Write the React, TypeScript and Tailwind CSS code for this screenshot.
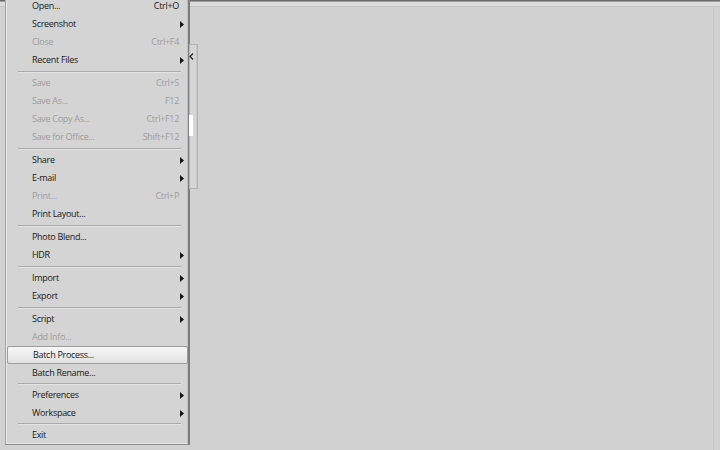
type Item =
  | { sep: true; h?: number }
  | { sep?: false; label: string; shortcut?: string; sub?: boolean; disabled?: boolean; active?: boolean };

const items: Item[] = [
  { label: 'Open...', shortcut: 'Ctrl+O' },
  { label: 'Screenshot', sub: true },
  { label: 'Close', shortcut: 'Ctrl+F4', disabled: true },
  { label: 'Recent Files', sub: true },
  { sep: true },
  { label: 'Save', shortcut: 'Ctrl+S', disabled: true },
  { label: 'Save As...', shortcut: 'F12', disabled: true },
  { label: 'Save Copy As...', shortcut: 'Ctrl+F12', disabled: true },
  { label: 'Save for Office...', shortcut: 'Shift+F12', disabled: true },
  { sep: true },
  { label: 'Share', sub: true },
  { label: 'E-mail', sub: true },
  { label: 'Print...', shortcut: 'Ctrl+P', disabled: true },
  { label: 'Print Layout...' },
  { sep: true },
  { label: 'Photo Blend...' },
  { label: 'HDR', sub: true },
  { sep: true },
  { label: 'Import', sub: true },
  { label: 'Export', sub: true },
  { sep: true },
  { label: 'Script', sub: true },
  { label: 'Add Info...', disabled: true },
  { label: 'Batch Process...', active: true },
  { label: 'Batch Rename...' },
  { sep: true, h: 4 },
  { label: 'Preferences', sub: true },
  { label: 'Workspace', sub: true },
  { sep: true, h: 4 },
  { label: 'Exit' },
];

function Arrow() {
  return (
    <svg width="4" height="7" viewBox="0 0 4 7" className="mr-[3px]">
      <path d="M0 0L4 3.5L0 7Z" fill="#151515" />
    </svg>
  );
}

function FileMenu() {
  return (
    <div className="absolute left-[5px] top-[-3px] w-[185px] h-[448px] bg-[#d4d4d4] border-l border-[#a2a2a2] border-r-2 border-r-[#7d7d7d] border-b border-b-[#8c8c8c]">
      <div className="h-full border-l border-[#e9e9e9] border-r border-r-[#c2c2c2] border-b border-b-[#e6e6e6]">
        {items.map((it, i) =>
          it.sep ? (
            <div
              key={i}
              className={(it.h === 4 ? 'h-[4px] pt-[1px]' : 'h-[5px] pt-[2px]') + ' ml-[11px] mr-[6px]'}
            >
              <div className="h-px bg-[#a9a9a9]" />
              <div className="h-px bg-[#e4e4e4]" />
            </div>
          ) : (
            <div
              key={i}
              className={
                'h-[18px] flex items-center justify-between pl-[25px] ' +
                (it.active
                  ? 'mr-[-1px] border border-[#9d9d9d] rounded-[2px] bg-gradient-to-b from-[#f7f7f7] to-[#e2e2e2] pl-[24px]'
                  : '') +
                (it.disabled ? ' text-[#9d9d9d]' : ' text-[#181818]')
              }
            >
              <span>{it.label}</span>
              {it.sub ? <Arrow /> : it.shortcut ? <span className="mr-[8px]">{it.shortcut}</span> : null}
            </div>
          )
        )}
      </div>
    </div>
  );
}

export default function App() {
  return (
    <div
      className="relative w-[720px] h-[450px] overflow-hidden bg-[#d1d1d1] text-[9px] tracking-[-0.3px]"
      style={{ fontFamily: '"Open Sans", "Noto Sans", sans-serif' }}
    >
      {/* window top edge */}
      <div className="h-px bg-[#6c6c6c]" />
      <div className="h-px bg-[#9a9a9a]" />
      <div className="h-[4px] bg-[#dcdcdc]" />
      <div className="h-px bg-[#c3c3c3]" />

      <div className="flex h-[443px]">
        <div className="w-[189px]" />
        {/* collapsed side panel */}
        <div className="relative z-10 mt-[37px] h-[145px] w-[9px] border border-[#b4b4b4] bg-[#d6d6d6]">
          <div className="h-full ml-[3px] border-r border-[#c8c8c8]" />
          <svg width="5" height="7" viewBox="0 0 5 7" className="absolute left-[-1px] top-[8px]">
            <path d="M4 0.5L1 3.5L4 6.5" stroke="#202020" strokeWidth="1.2" fill="none" />
          </svg>
          <div className="absolute left-[-1px] top-[70px] w-[4px] h-[21px] bg-white" />
        </div>
        <div className="flex-1 border-r border-[#c6c6c6] mr-[6px]" />
      </div>

      <FileMenu />
    </div>
  );
}
